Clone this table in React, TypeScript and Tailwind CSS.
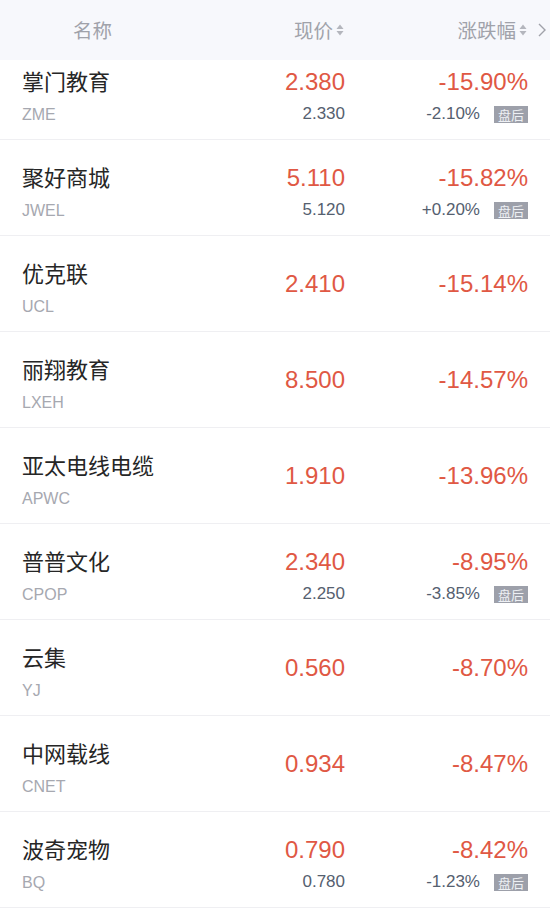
import React from 'react';

type Stock = {
  name: string;
  code: string;
  price: string;
  pct: string;
  after?: { price: string; pct: string };
};

const stocks: Stock[] = [
  { name: '掌门教育', code: 'ZME', price: '2.380', pct: '-15.90%', after: { price: '2.330', pct: '-2.10%' } },
  { name: '聚好商城', code: 'JWEL', price: '5.110', pct: '-15.82%', after: { price: '5.120', pct: '+0.20%' } },
  { name: '优克联', code: 'UCL', price: '2.410', pct: '-15.14%' },
  { name: '丽翔教育', code: 'LXEH', price: '8.500', pct: '-14.57%' },
  { name: '亚太电线电缆', code: 'APWC', price: '1.910', pct: '-13.96%' },
  { name: '普普文化', code: 'CPOP', price: '2.340', pct: '-8.95%', after: { price: '2.250', pct: '-3.85%' } },
  { name: '云集', code: 'YJ', price: '0.560', pct: '-8.70%' },
  { name: '中网载线', code: 'CNET', price: '0.934', pct: '-8.47%' },
  { name: '波奇宠物', code: 'BQ', price: '0.790', pct: '-8.42%', after: { price: '0.780', pct: '-1.23%' } },
];

const font = { fontFamily: '"Liberation Sans", "Noto Sans CJK SC", sans-serif' };
const cjk = { fontFamily: '"Noto Sans CJK SC", sans-serif' };

// little up/down sort arrows next to header labels
const SortIcon = () => (
  <svg width="8" height="12" viewBox="0 0 8 12" className="ml-[3px]">
    <path d="M4 0.5 L7.5 5 L0.5 5 Z" fill="#b4b6bd" />
    <path d="M4 11.5 L7.5 7 L0.5 7 Z" fill="#b4b6bd" />
  </svg>
);

const Row = ({ s }: { s: Stock }) => (
  <div className="flex h-[96px] border-b border-[#efeff2] bg-white pl-[22px] pr-[22px]">
    <div className="flex-1 pt-[21px]">
      <div className="text-[22px] leading-[30px] text-[#262626]" style={cjk}>
        {s.name}
      </div>
      <div className="mt-[10px] text-[16px] leading-[20px] text-[#a6a8b0]">{s.code}</div>
    </div>
    {s.after ? (
      <>
        <div className="w-[120px] pt-[23px] text-right">
          <div className="text-[24px] leading-[30px] text-[#e05844]">{s.price}</div>
          <div className="mt-[7px] text-[17px] leading-[20px] text-[#55606f]">{s.after.price}</div>
        </div>
        <div className="w-[183px] pt-[23px] text-right">
          <div className="text-[24px] leading-[30px] text-[#e05844]">{s.pct}</div>
          <div className="mt-[7px] flex items-center justify-end">
            <span className="text-[17px] leading-[20px] text-[#55606f]">{s.after.pct}</span>
            <span
              className="ml-[14px] flex h-[17px] w-[34px] items-center justify-center bg-[#9da0aa] text-[13px] leading-none text-[#eef0f4]"
              style={cjk}
            >
              盘后
            </span>
          </div>
        </div>
      </>
    ) : (
      <>
        <div className="flex w-[120px] items-center justify-end text-[24px] text-[#e05844]">{s.price}</div>
        <div className="flex w-[183px] items-center justify-end text-[24px] text-[#e05844]">{s.pct}</div>
      </>
    )}
  </div>
);

export default function App() {
  return (
    <div className="h-[911px] w-[550px] overflow-hidden bg-white" style={font}>
      <div
        className="relative z-10 flex h-[60px] items-center bg-[#f7f8fc] pl-[22px] text-[19.5px] text-[#a0a2aa]"
        style={cjk}
      >
        <div className="flex-1 pl-[51px]">名称</div>
        <div className="flex w-[120px] items-center justify-end">
          现价
          <SortIcon />
        </div>
        <div className="flex w-[183px] items-center justify-end">
          涨跌幅
          <SortIcon />
        </div>
        <svg width="8" height="14" viewBox="0 0 8 14" className="ml-[11px] mr-[4px]">
          <path d="M1 1 L7 7 L1 13" fill="none" stroke="#a0a2aa" strokeWidth="1.4" />
        </svg>
      </div>
      <div className="-mt-[16px]">
        {stocks.map((s) => (
          <Row key={s.code} s={s} />
        ))}
      </div>
    </div>
  );
}
